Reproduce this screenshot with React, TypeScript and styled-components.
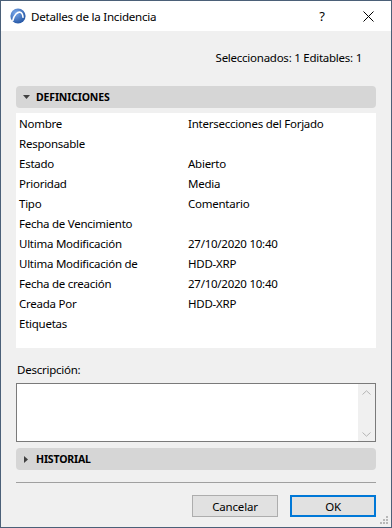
import React from 'react';
import styled, { createGlobalStyle } from 'styled-components';

const UI_FONT = `"Segoe UI", "Noto Sans", "Open Sans", sans-serif`;

const GlobalStyle = createGlobalStyle`
    html, body {
        margin: 0;
        padding: 0;
        background: #f0f0f0;
    }
    * {
        box-sizing: border-box;
    }
`
const Window = styled.div`
    width: 392px;
    height: 528px;
    border: 1px solid #4b6078;
    display: flex;
    flex-direction: column;
    font-family: ${UI_FONT};
    font-size: 11.5px;
    letter-spacing: -0.25px;
    color: #000;
    background: #f0f0f0;
    position: relative;
`
const TitleBar = styled.div`
    height: 30px;
    background: #fff;
    display: flex;
    align-items: center;
    padding-left: 9px;
`
const TitleText = styled.span`
    margin-left: 5px;
    font-size: 11.6px;
    flex: 1;
`
const TitleButton = styled.div`
    width: 46px;
    height: 30px;
    display: flex;
    align-items: center;
    justify-content: center;
    font-size: 13px;
`
const Body = styled.div`
    flex: 1;
    padding: 17px 15px 0 15px;
    display: flex;
    flex-direction: column;
`
const Status = styled.div`
    height: 20px;
    line-height: 20px;
    text-align: right;
    padding-right: 14px;
`
const SectionHeader = styled.div<{ $gap: number }>`
    margin-top: ${props => props.$gap}px;
    height: 22px;
    background: #d6d6d6;
    border-radius: 4px;
    display: flex;
    align-items: center;
    padding-left: 6px;
    font-weight: bold;
    font-size: 10.5px;
    letter-spacing: -0.15px;
`
const Arrow = styled.span`
    width: 8px;
    display: flex;
    justify-content: center;
    margin-right: 6px;
`
const Panel = styled.div`
    margin-top: 5px;
    height: 235px;
    background: #fff;
    padding-left: 3px;
`
const Row = styled.div`
    height: 20px;
    display: grid;
    grid-template-columns: 169px 1fr;
    align-items: center;
`
const Label = styled.div`
    margin-top: 14px;
    height: 16px;
    line-height: 16px;
    padding-left: 1px;
`
const TextArea = styled.div`
    margin-top: 5px;
    height: 59px;
    border: 1px solid #7a7a7a;
    background: #fff;
    display: flex;
    justify-content: flex-end;
`
const ScrollBar = styled.div`
    width: 17px;
    background: #f0f0f0;
    display: flex;
    flex-direction: column;
    justify-content: space-between;
    align-items: center;
    padding: 6px 0 4px;
`
const Separator = styled.div`
    margin-top: 12px;
    height: 1px;
    background: #a0a0a0;
`
const Footer = styled.div`
    margin-top: 12px;
    display: flex;
    justify-content: flex-end;
    gap: 12px;
`
const Button = styled.button<{ $default?: boolean }>`
    width: 86px;
    height: 22px;
    font-family: ${UI_FONT};
    font-size: 11.5px;
    letter-spacing: -0.2px;
    color: #000;
    background: #e1e1e1;
    border: ${props => props.$default ? '2px solid #0078d7' : '1px solid #adadad'};
    padding: 0;
`
const Grip = styled.svg`
    position: absolute;
    right: 2px;
    bottom: 2px;
`

const rows: [string, string][] = [
    ['Nombre', 'Intersecciones del Forjado'],
    ['Responsable', ''],
    ['Estado', 'Abierto'],
    ['Prioridad', 'Media'],
    ['Tipo', 'Comentario'],
    ['Fecha de Vencimiento', ''],
    ['Ultima Modificación', '27/10/2020 10:40'],
    ['Ultima Modificación de', 'HDD-XRP'],
    ['Fecha de creación', '27/10/2020 10:40'],
    ['Creada Por', 'HDD-XRP'],
    ['Etiquetas', ''],
]

function AppIcon() {
    return (
        <svg width="16" height="16" viewBox="0 0 16 16">
            <defs>
                <radialGradient id="ic" cx="0.35" cy="0.3" r="0.8">
                    <stop offset="0" stopColor="#7aa8ea" />
                    <stop offset="1" stopColor="#1d4f9e" />
                </radialGradient>
            </defs>
            <circle cx="8" cy="8" r="7.6" fill="url(#ic)" />
            <path d="M2.8 12.6 C4 7 7.5 3.6 10.2 4.2 C12 4.6 12.8 7 13 9.2" fill="none" stroke="#fff" strokeWidth="1.6" strokeLinecap="round" />
        </svg>
    )
}

function App() {
    return (
        <Window>
            <GlobalStyle />
            <TitleBar>
                <AppIcon />
                <TitleText>Detalles de la Incidencia</TitleText>
                <TitleButton>?</TitleButton>
                <TitleButton>
                    <svg width="11" height="11" viewBox="0 0 11 11">
                        <path d="M0.5 0.5 L10.5 10.5 M10.5 0.5 L0.5 10.5" stroke="#000" strokeWidth="1" />
                    </svg>
                </TitleButton>
            </TitleBar>
            <Body>
                <Status>Seleccionados: 1 Editables: 1</Status>
                <SectionHeader $gap={18}>
                    <Arrow>
                        <svg width="7" height="4" viewBox="0 0 7 4"><path d="M0 0 H7 L3.5 4 Z" fill="#404040" /></svg>
                    </Arrow>
                    DEFINICIONES
                </SectionHeader>
                <Panel>
                    {rows.map(([k, v]) => (
                        <Row key={k}>
                            <span>{k}</span>
                            <span>{v}</span>
                        </Row>
                    ))}
                </Panel>
                <Label>Descripción:</Label>
                <TextArea>
                    <ScrollBar>
                        <svg width="9" height="5" viewBox="0 0 9 5"><path d="M0.5 4.5 L4.5 0.8 L8.5 4.5" fill="none" stroke="#b4b4b4" strokeWidth="1" /></svg>
                        <svg width="9" height="5" viewBox="0 0 9 5"><path d="M0.5 0.5 L4.5 4.2 L8.5 0.5" fill="none" stroke="#b4b4b4" strokeWidth="1" /></svg>
                    </ScrollBar>
                </TextArea>
                <SectionHeader $gap={6}>
                    <Arrow>
                        <svg width="4" height="7" viewBox="0 0 4 7"><path d="M0 0 V7 L4 3.5 Z" fill="#404040" /></svg>
                    </Arrow>
                    HISTORIAL
                </SectionHeader>
                <Separator />
                <Footer>
                    <Button>Cancelar</Button>
                    <Button $default>OK</Button>
                </Footer>
            </Body>
            <Grip width="9" height="9" viewBox="0 0 9 9">
                <g fill="#b8b8b8">
                    <rect x="6" y="0" width="2" height="2" />
                    <rect x="3" y="3" width="2" height="2" />
                    <rect x="6" y="3" width="2" height="2" />
                    <rect x="0" y="6" width="2" height="2" />
                    <rect x="3" y="6" width="2" height="2" />
                    <rect x="6" y="6" width="2" height="2" />
                </g>
            </Grip>
        </Window>
    )
}

export default App;
